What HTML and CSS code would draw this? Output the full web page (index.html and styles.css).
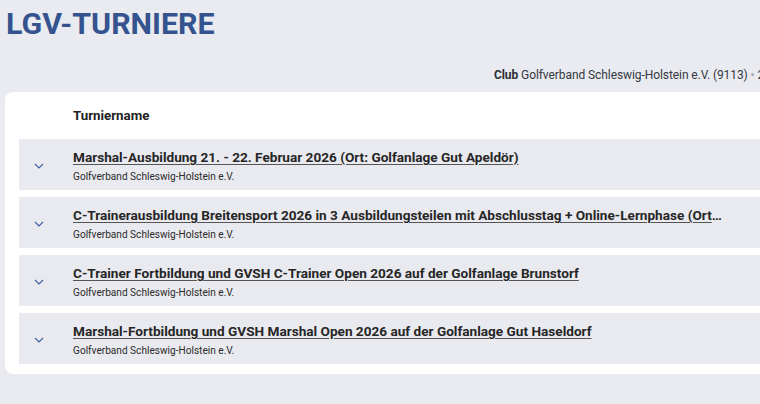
FILE: index.html
```html
<!DOCTYPE html>
<html lang="de">
<head>
<meta charset="utf-8">
<title>LGV-Turniere</title>
<link rel="stylesheet" href="styles.css">
</head>
<body>
<div class="page">
  <h1 class="page-title">LGV-TURNIERE</h1>
  <div class="club-line"><span class="club-inner"><b>Club</b> Golfverband Schleswig-Holstein e.V. (9113) <span class="dot">•</span> 2026</span></div>
  <div class="card">
    <div class="table-head">
      <div class="chev-cell"></div>
      <div class="head-name">Turniername</div>
    </div>
    <div class="row">
      <div class="chev-cell"><svg class="chev" width="10" height="6" viewBox="0 0 10 6"><path d="M1 1 L5 5 L9 1" fill="none" stroke="#3b5ca3" stroke-width="1.1"/></svg></div>
      <div class="row-body">
        <a class="row-title">Marshal-Ausbildung 21. - 22. Februar 2026 (Ort: Golfanlage Gut Apeldör)</a>
        <div class="row-sub">Golfverband Schleswig-Holstein e.V.</div>
      </div>
    </div>
    <div class="row">
      <div class="chev-cell"><svg class="chev" width="10" height="6" viewBox="0 0 10 6"><path d="M1 1 L5 5 L9 1" fill="none" stroke="#3b5ca3" stroke-width="1.1"/></svg></div>
      <div class="row-body">
        <a class="row-title">C-Trainerausbildung Breitensport 2026 in 3 Ausbildungsteilen mit Abschlusstag + Online-Lernphase (Ort: Golfanlage Gut Apeldör)</a>
        <div class="row-sub">Golfverband Schleswig-Holstein e.V.</div>
      </div>
    </div>
    <div class="row">
      <div class="chev-cell"><svg class="chev" width="10" height="6" viewBox="0 0 10 6"><path d="M1 1 L5 5 L9 1" fill="none" stroke="#3b5ca3" stroke-width="1.1"/></svg></div>
      <div class="row-body">
        <a class="row-title">C-Trainer Fortbildung und GVSH C-Trainer Open 2026 auf der Golfanlage Brunstorf</a>
        <div class="row-sub">Golfverband Schleswig-Holstein e.V.</div>
      </div>
    </div>
    <div class="row">
      <div class="chev-cell"><svg class="chev" width="10" height="6" viewBox="0 0 10 6"><path d="M1 1 L5 5 L9 1" fill="none" stroke="#3b5ca3" stroke-width="1.1"/></svg></div>
      <div class="row-body">
        <a class="row-title">Marshal-Fortbildung und GVSH Marshal Open 2026 auf der Golfanlage Gut Haseldorf</a>
        <div class="row-sub">Golfverband Schleswig-Holstein e.V.</div>
      </div>
    </div>
  </div>
</div>
</body>
</html>
```

FILE: styles.css
```css
html, body {
  margin: 0;
  padding: 0;
  background: #eaebf0;
  overflow: hidden;
  font-family: Roboto, "Liberation Sans", Arial, sans-serif;
  color: #2b2b2b;
}
.page {
  width: 1000px;
  padding: 0 0 0 5px;
}
.page-title {
  margin: 0;
  padding: 6px 0 0 1px;
  font-size: 30.4px;
  line-height: 36px;
  font-weight: 700;
  color: #34538f;
  letter-spacing: 0;
}
.club-line {
  height: 18px;
  margin-top: 24px;
  font-size: 12px;
  line-height: 18px;
  color: #333842;
  padding-left: 489px;
  white-space: nowrap;
  letter-spacing: -0.08px;
}
.club-line b {
  font-weight: 700;
  color: #2a2e37;
}
.dot {
  color: #9aa0aa;
}
.card {
  margin-top: 8px;
  background: #fff;
  border-radius: 8px;
  padding: 0 0 10px 14px;
}
.table-head {
  display: flex;
  height: 47px;
  align-items: center;
}
.chev-cell {
  width: 54px;
  flex: 0 0 54px;
  display: flex;
  align-items: center;
  justify-content: center;
  padding-right: 14px;
  box-sizing: border-box;
}
.head-name {
  font-size: 13.3px;
  font-weight: 700;
  color: #222;
}
.row {
  display: flex;
  height: 51px;
  background: #e9eaef;
  margin-bottom: 7px;
}
.row:last-child {
  margin-bottom: 0;
}
.row .chev-cell {
  padding-top: 3px;
}
.row-body {
  padding-top: 9px;
  min-width: 0;
}
.row-title {
  display: block;
  max-width: 650px;
  font-size: 13.6px;
  font-weight: 700;
  line-height: 18px;
  color: #262626;
  text-decoration: underline;
  text-decoration-color: #555;
  text-underline-offset: 2px;
  white-space: nowrap;
  overflow: hidden;
  text-overflow: ellipsis;
}
.row-sub {
  margin-top: 4px;
  font-size: 10.1px;
  line-height: 14px;
  color: #2b2b2b;
}
```
